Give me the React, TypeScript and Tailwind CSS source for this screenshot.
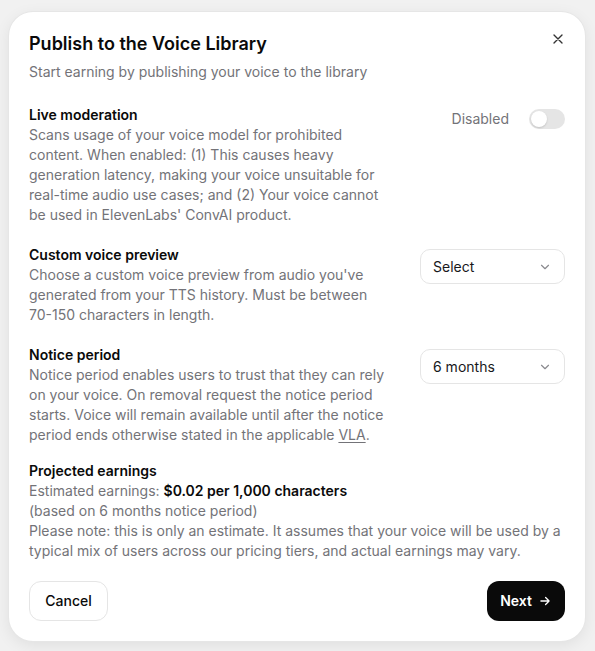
import { useState } from "react";

function Chevron() {
  return (
    <svg width="14" height="14" viewBox="0 0 24 24" fill="none" stroke="#8a8a8f" strokeWidth="2" strokeLinecap="round" strokeLinejoin="round">
      <path d="m6 9 6 6 6-6" />
    </svg>
  );
}

function SelectBox({ value }: { value: string }) {
  return (
    <button
      type="button"
      className="mt-1 flex h-[35px] w-[145px] items-center justify-between rounded-[10px] border border-[#e5e5e5] bg-white px-3 text-sm text-[#18181b]"
    >
      <span>{value}</span>
      <Chevron />
    </button>
  );
}

function Row({ title, children, control }: { title: string; children: React.ReactNode; control: React.ReactNode }) {
  return (
    <div className="flex items-start justify-between">
      <div className="w-[360px]">
        <h3 className="text-sm font-semibold leading-5 text-[#0a0a0a]">{title}</h3>
        <p className="text-sm leading-5 text-[#737378]">{children}</p>
      </div>
      {control}
    </div>
  );
}

export default function App() {
  const [enabled, setEnabled] = useState(false);

  return (
    <div className="min-h-[651px] w-full bg-[#f1f1f1] pl-[9px] pt-[12px] font-['Inter',sans-serif]">
      <div className="w-[576px] rounded-[24px] bg-white px-5 pb-5 pt-5 shadow-[0_0_0_1px_#e6e6e6,0_4px_16px_rgba(0,0,0,0.08)]">
        <div className="flex items-start justify-between">
          <h2 className="text-lg font-semibold leading-6 text-[#0a0a0a]">Publish to the Voice Library</h2>
          <button type="button" className="mr-[-1px] mt-[-1px] text-[#333]" aria-label="Close">
            <svg width="16" height="16" viewBox="0 0 24 24" fill="none" stroke="currentColor" strokeWidth="2" strokeLinecap="round">
              <path d="M18 6 6 18M6 6l12 12" />
            </svg>
          </button>
        </div>
        <p className="mt-[6px] text-sm leading-5 text-[#737378]">Start earning by publishing your voice to the library</p>

        <div className="mt-[23px] flex flex-col gap-5">
          <Row
            title="Live moderation"
            control={
              <div className="flex items-center gap-5 pt-[4px]">
                <span className="text-sm text-[#737378]">Disabled</span>
                <button
                  type="button"
                  onClick={() => setEnabled(!enabled)}
                  className={`flex h-5 w-9 items-center rounded-full p-[2px] ${enabled ? "justify-end bg-black" : "bg-[#e5e5e5]"}`}
                >
                  <span className="h-4 w-4 rounded-full bg-white shadow-[0_1px_2px_rgba(0,0,0,0.15)]" />
                </button>
              </div>
            }
          >
            Scans usage of your voice model for prohibited content. When enabled: (1) This causes heavy generation latency, making your voice unsuitable for real-time audio use cases; and (2) Your voice cannot be used in ElevenLabs' ConvAI product.
          </Row>

          <Row title="Custom voice preview" control={<SelectBox value="Select" />}>
            Choose a custom voice preview from audio you've generated from your TTS history. Must be between 70-150 characters in length.
          </Row>

          <Row title="Notice period" control={<SelectBox value="6 months" />}>
            Notice period enables users to trust that they can rely on your voice. On removal request the notice period starts. Voice will remain available until after the notice period ends otherwise stated in the applicable <span className="underline underline-offset-2">VLA</span>.
          </Row>
        </div>

        <div className="mt-4">
          <h3 className="text-sm font-semibold leading-5 text-[#0a0a0a]">Projected earnings</h3>
          <p className="text-sm leading-5 text-[#737378]">
            Estimated earnings: <span className="font-semibold text-[#0a0a0a]">$0.02 per 1,000 characters</span>
          </p>
          <p className="text-sm leading-5 text-[#737378]">(based on 6 months notice period)</p>
          <p className="text-sm leading-5 text-[#737378]">
            Please note: this is only an estimate. It assumes that your voice will be used by a typical mix of users across our pricing tiers, and actual earnings may vary.
          </p>
        </div>

        <div className="mt-5 flex items-center justify-between">
          <button type="button" className="h-10 w-[79px] rounded-xl border border-[#e5e5e5] bg-white text-sm font-medium text-[#0a0a0a]">
            Cancel
          </button>
          <button type="button" className="flex h-10 w-[78px] items-center justify-center gap-1.5 rounded-xl bg-[#0a0a0a] text-sm font-semibold text-white">
            Next
            <svg width="14" height="14" viewBox="0 0 24 24" fill="none" stroke="currentColor" strokeWidth="2.2" strokeLinecap="round" strokeLinejoin="round">
              <path d="M5 12h14M13 6l6 6-6 6" />
            </svg>
          </button>
        </div>
      </div>
    </div>
  );
}
